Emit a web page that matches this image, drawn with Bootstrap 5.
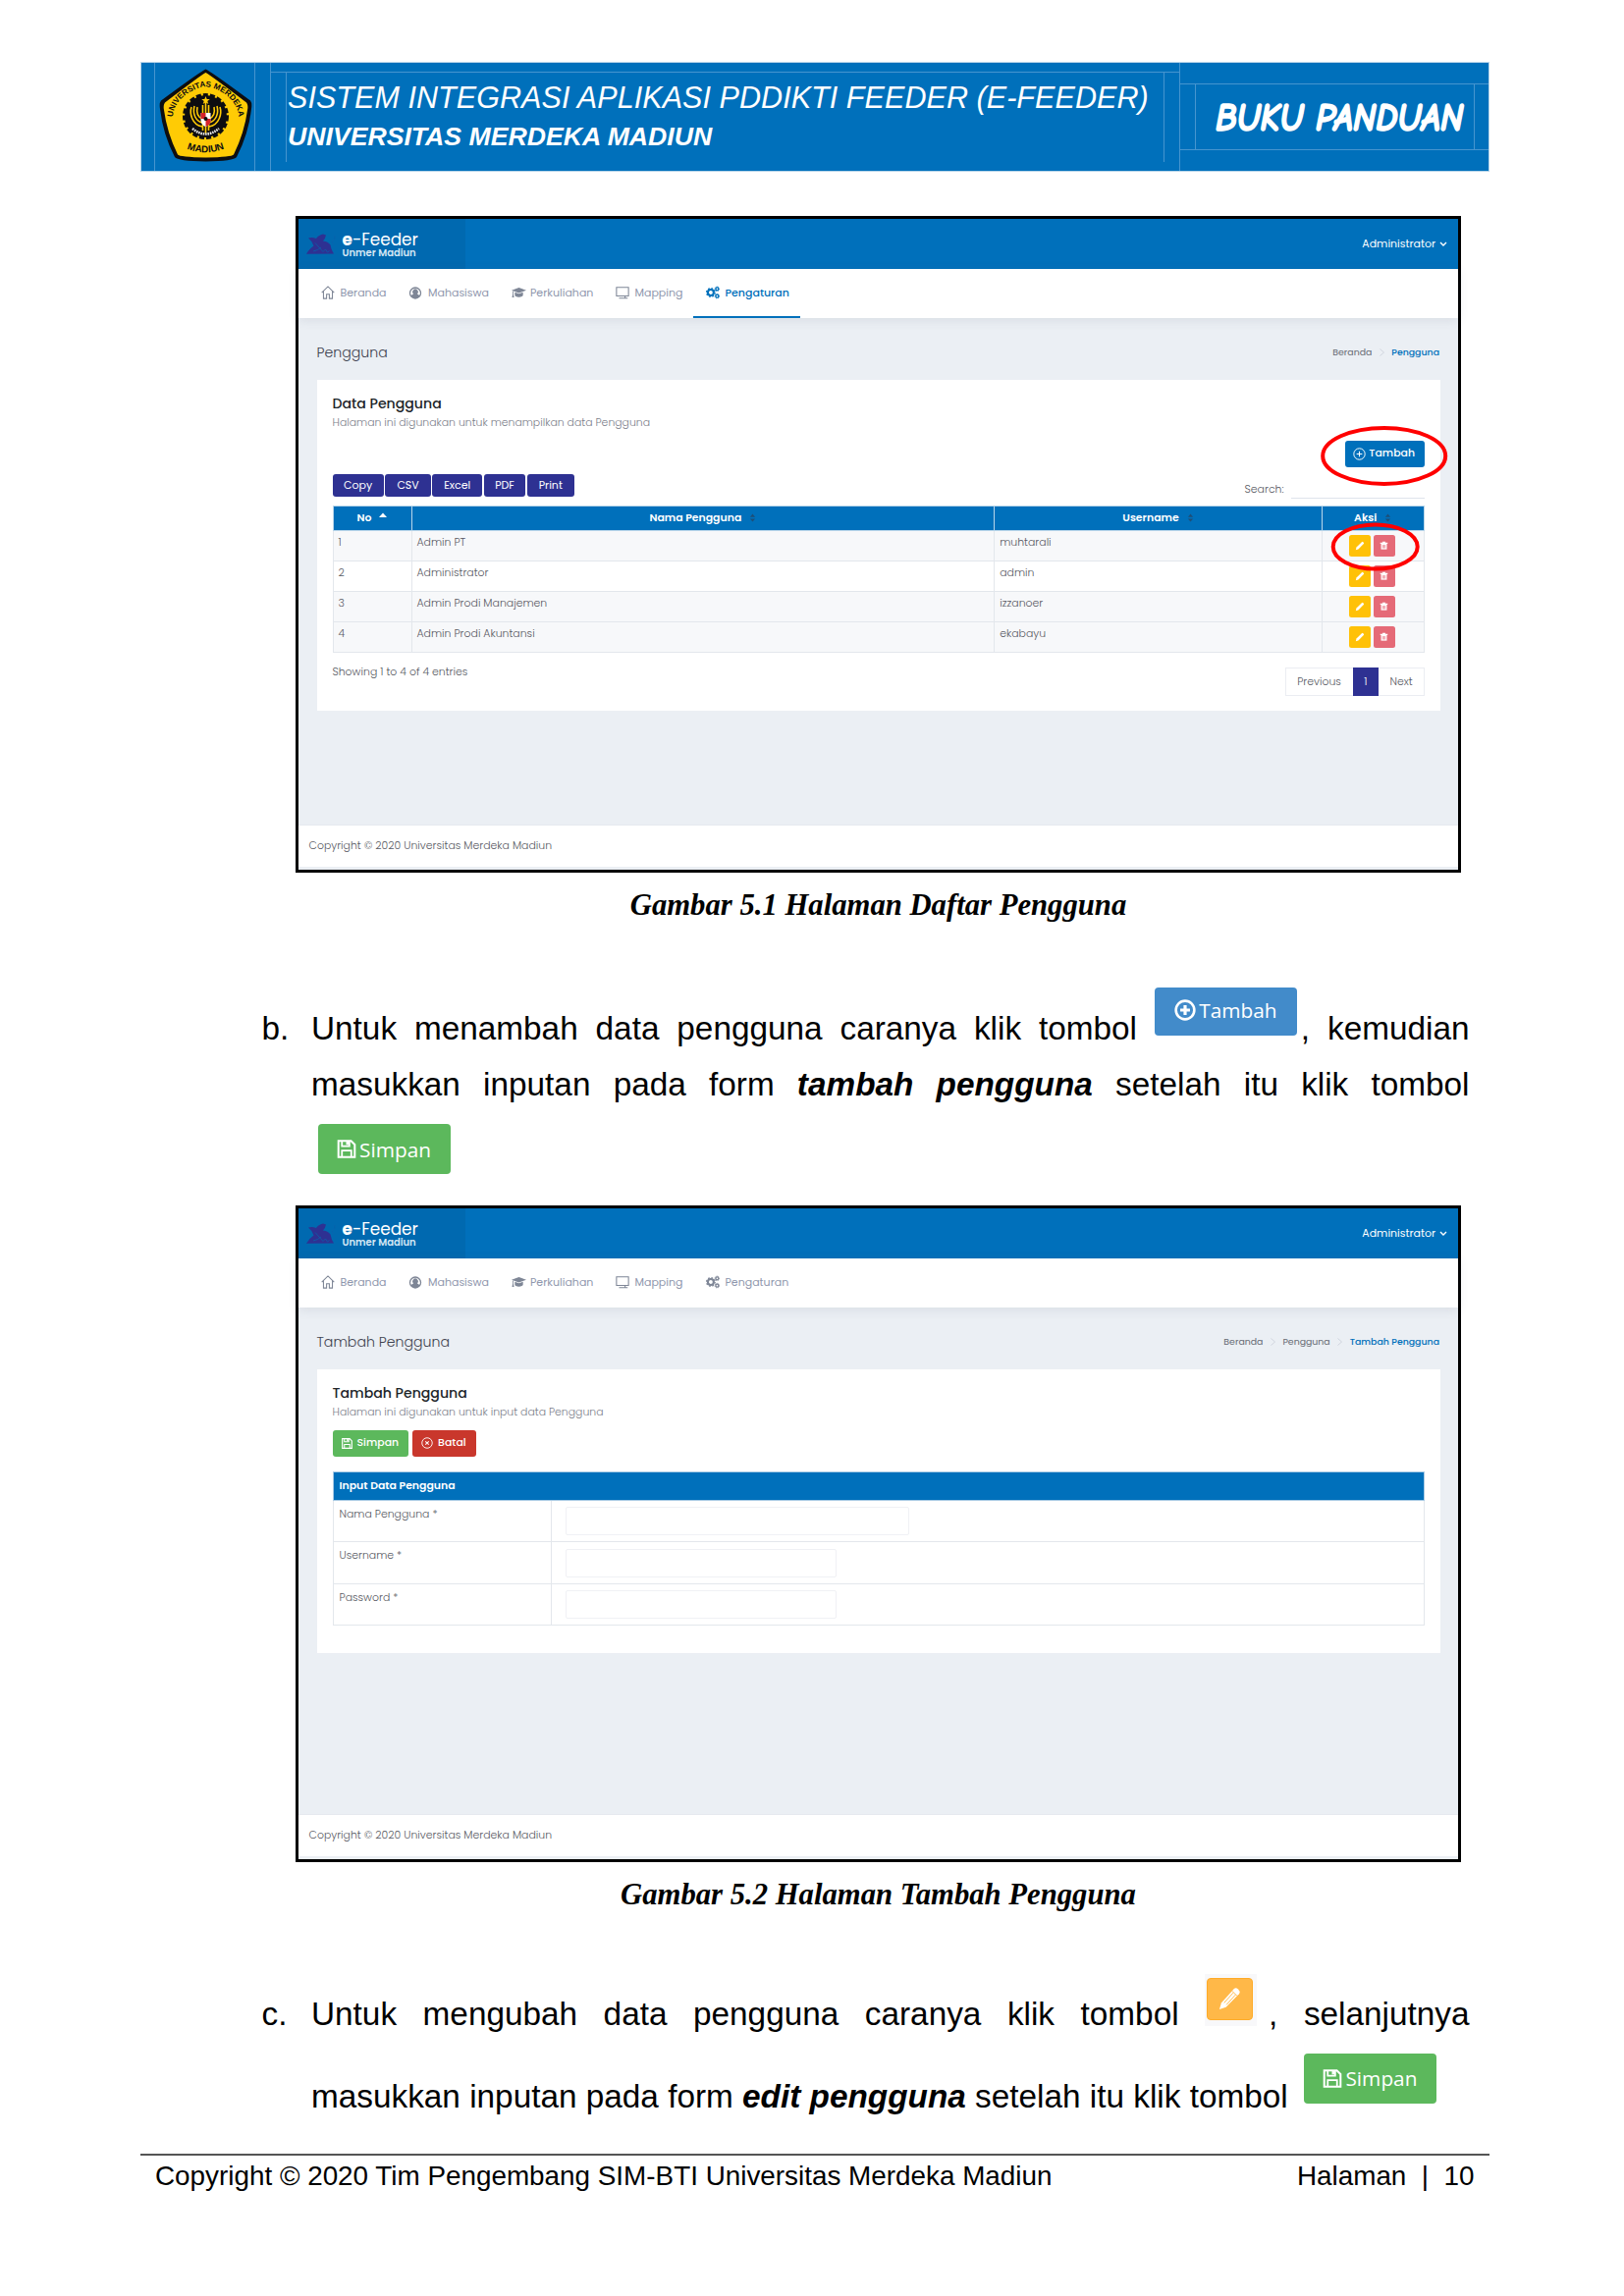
<!DOCTYPE html>
<html lang="id">
<head>
<meta charset="utf-8">
<meta name="viewport" content="width=device-width, initial-scale=1">
<title>Buku Panduan e-Feeder</title>
<link rel="stylesheet" href="https://cdn.jsdelivr.net/npm/bootstrap@5.3.0/dist/css/bootstrap.min.css">
<style>
:root{--brand:#0070bb;--indigo:#2e3192;--rule:#4695cf;--cell:#e3e7ec}
body{width:1654px;height:2339px;overflow:hidden;background:#fff;color:#000;font-family:"Liberation Sans",Arial,sans-serif}
svg{display:block;flex:none}

/* running header */
.doc-head{width:1373.5px;height:112px;margin:63px 0 0 143px;background:var(--brand);color:#fff;outline:1px solid #b9d6ea;outline-offset:-1px}
.seal-cell{width:132.5px;padding:0 15px 0 14px;border-right:1px solid var(--rule)}
.seal-in{border:1px solid var(--rule);border-width:0 1px;padding:6px 0 0 2.5px;height:100%}
.title-cell{width:926px;padding-top:10px;border-right:1px solid var(--rule)}
.title-top{border-top:1px solid var(--rule);padding:0 15px}
.title-in{height:91px;padding:4.5px 0 0 1.5px;border:1px solid var(--rule);border-width:0 1px;font-style:italic;white-space:nowrap}
.t-one{font-size:30.55px;line-height:41.5px;letter-spacing:.04px}
.t-two{font-size:26.65px;line-height:39.5px;font-weight:700}
.book-cell{width:315px;padding:22px 0}
.book-mid{height:68px;border:1px solid var(--rule);border-width:1px 0;padding:0 15px}
.book-in{height:100%;border:1px solid var(--rule);border-width:0 1px}
.book-in svg{overflow:visible}

/* framed application windows */
.shot{width:1187px;height:669px;margin:0 0 0 301px;border:3px solid #000;background:#ebeff4;color:#575962;font:300 10.9px/18px Poppins,Inter,sans-serif;overflow:visible}
.topbar{height:51px;background:var(--brand);color:#fff;padding:0;flex:none}
.brandbox{width:170px;height:51px;background:#0069b0;padding:1px 0 0 7.5px}
.b-one{font-size:16.9px;line-height:17px;margin-top:1px;font-weight:400}
.b-one b{font-weight:700}
.b-two{font-size:10px;line-height:10px;font-weight:600;color:#d5e7f4;margin-top:.5px}
.admin-link{font-size:10.95px;font-weight:400;padding-right:11px}
.tabs{height:50px;background:#fff;padding-left:10px;box-shadow:0 2px 11px rgba(70,80,110,.12);position:relative;flex:none}
.tabs .nav-link{height:50px;padding:0 0 0 12.5px;gap:6px;font-size:11px;font-weight:400;color:#8f97ad;border-bottom:2.5px solid transparent;border-radius:0;white-space:nowrap}
.tabs .nav-link svg{color:#7e8696}
.tabs .nav-link.active{color:var(--brand);font-weight:500;border-color:var(--brand)}
.tabs .nav-link.active svg{color:var(--brand)}
.w1{width:89.5px}.w2{width:105px}.w3{width:105.5px}.w4{width:92px}.w5{width:108.7px}
.tabs .w3{gap:4px}
.pagehead{height:63px;padding:7px 19px 0 18.5px;flex:none}
.pagehead h2{font:300 14.15px/20px Poppins,Inter,sans-serif;color:#3f4350;margin:0}
.crumbs{font-size:9.4px;font-weight:400;gap:7.5px}
.crumbs span{color:#666a73}
.crumbs b{font-weight:500;color:var(--brand)}
.panel{margin:0 18.5px 0 19px;background:#fff;padding:14px 15.5px 0 15.5px;flex:none}
.p-list{height:337px}.p-form{height:289px}
.panel h3{font:500 14.1px/20px Poppins,Inter,sans-serif;color:#212529;margin:0}
.sub{font-size:10.88px;line-height:18px;color:#7b7e8a;margin:1px 0 0}
.btn-app{height:26.5px;border-radius:3px;color:#fff;font-size:10.9px;font-weight:500;line-height:1;padding:0 10px 0 9px;gap:3px;border:0}
.c-blue{background:var(--brand);padding-left:8.5px}.c-green{background:#5cb85c}.c-red{background:#c9372c}
.tools{height:31.5px;margin-top:7.7px}
.tools .btn{height:22.7px;border-radius:3px;background:var(--indigo);color:#fff;font-size:11px;font-weight:400;line-height:1;padding:0 0 1px;border:0;margin-right:1.8px}
.find{margin-top:7px}
.find i{width:136px;height:17.5px;border-bottom:1px solid #dfe3ec;margin-left:7.5px}
.grid{table-layout:fixed;width:1112px;margin:0;color:inherit;border:1px solid var(--cell);border-collapse:collapse}
.grid>thead>tr>th{height:25px;padding:0;background:var(--brand);color:#fff;font-weight:600;font-size:10.9px;text-align:center;border:1px solid #b9d6ea;line-height:17px;box-shadow:none}
.grid>tbody>tr>td{height:31px;padding:3px 0 0 5px;border:1px solid var(--cell);background:#f7f8fa;color:#575962;line-height:18px;vertical-align:top;box-shadow:none;font-size:10.9px}
.grid>tbody>tr.plain>td{background:#fff}
.grid>tbody>tr>td.act{padding:4.5px 0 0 27px}
.grid th svg{display:inline-block;margin-left:8px;vertical-align:-1px}
.act span{width:22px;height:21.6px;border-radius:2.5px;color:#fff}
.act .y{background:#ffc107;margin-right:3px}.act .p{background:#e56a77}
.pager{height:28.7px;border:1px solid #ebedf2;margin-top:4.5px;line-height:27px;font-weight:300}
.pager span{text-align:center}
.pager .on{background:var(--indigo);color:#fff;margin:-1px 0;line-height:29px}
.copybar{height:43px;background:#fff;border-top:1px solid #e6e9ef;padding:12px 0 0 10.5px;margin-bottom:3.5px}
.frm{table-layout:fixed;width:1112px;margin:0;border:1px solid var(--cell);border-collapse:collapse}
.frm>thead>tr>th{height:28.5px;background:var(--brand);color:#fff;font-weight:600;font-size:10.9px;padding:0 0 0 6px;border:1px solid #a9cbe5;line-height:18px;vertical-align:middle}
.frm>tbody>tr>td{height:42.5px;padding:5px 0 0 6px;border:1px solid var(--cell);color:#575962;line-height:18px;vertical-align:top;font-size:10.9px}
.frm>tbody>tr>td+td{padding:6.5px 0 0 14px}
.frm .form-control{height:29px;border:1px solid #f0f1f5;border-radius:2px;padding:0}
.long{width:350px}.short{width:276px}
.rings{position:absolute;left:0;top:0;pointer-events:none}

/* captions, steps, running footer */
.cap{font:italic 700 30.7px/46px "Liberation Serif","Times New Roman",serif;width:1187px;margin-left:301px;text-align:center}
.ln{width:1179.5px;height:57px;margin-left:317px;font-size:33.33px;line-height:57px;white-space:nowrap;color:#000}
.ln.full{text-align:justify;text-align-last:justify}
.mk{display:inline-block;width:50.5px;margin-left:-50.5px;text-align-last:left}
.pic{display:inline-flex;vertical-align:bottom;align-items:center;justify-content:center;border-radius:4px;color:#fff;font:400 20.8px/24px "Open Sans",sans-serif;gap:3px}
.pic-add{width:145px;height:49px;background:#428bca;margin:-13.5px 4px 21.5px 0;padding-bottom:2px}
.pic-save{width:135px;height:51px;background:#5cb85c}
.pic-edit{width:53px;height:53px;background:#f8f8fa;border-radius:0;margin:-12px 12px 16px 0;padding:4px 4px 6px 2px}
.pic-edit span{width:47px;height:43px;background:#ffb848;border:1px solid #ffab27;border-radius:4px}
.doc-foot{width:1373.5px;margin-left:143px;border-top:2px solid #555;padding:1px 15px 0 15px;font-size:27.85px;line-height:40px;white-space:pre}
</style>
</head>
<body>
<svg width="0" height="0" class="position-absolute" aria-hidden="true">
<symbol id="i-home" viewBox="0 0 16 16"><path d="M.8 8.2 8 1l7.2 7.2M2.8 6.6V15h3.6v-5h3.2v5h3.6V6.6" fill="none" stroke="currentColor" stroke-width="1.2"/></symbol>
<symbol id="i-user" viewBox="0 0 16 16"><path fill-rule="evenodd" d="M8 .4a7.600 7.600 0 1 1 0 15.200A7.600 7.600 0 0 1 8 .4zM8 2a6 6 0 0 0-4.900 9.400c.5-1.500 1.400-2.200 2.700-2.300a3.400 3.400 0 1 1 4.400 0c1.300.1 2.200.8 2.700 2.300A6 6 0 0 0 8 2z" fill="currentColor"/></symbol>
<symbol id="i-cap" viewBox="0 0 18 16"><path d="M9 2 18 5.300 9 8.600 0 5.300z" fill="currentColor"/><path d="M4 7.700v3.600c0 1.200 2.300 2.300 5 2.300s5-1.100 5-2.300V7.700L9 9.600zM1.300 6.200h1v4.300l.8 3.500H.6l.7-3.500z" fill="currentColor"/></symbol>
<symbol id="i-screen" viewBox="0 0 16 16"><path d="M1 2h14v10H1zM4 14.500h10M11 12v2" fill="none" stroke="currentColor" stroke-width="1.200"/></symbol>
<symbol id="i-gears" viewBox="0 0 16 16"><circle cx="5.600" cy="8" r="3.400" fill="none" stroke="currentColor" stroke-width="2.400"/><circle cx="5.600" cy="8" r="4.900" fill="none" stroke="currentColor" stroke-width="1.500" stroke-dasharray="1.900 1.950"/><circle cx="13" cy="3.800" r="1.700" fill="none" stroke="currentColor" stroke-width="1.500"/><circle cx="13" cy="3.800" r="2.600" fill="none" stroke="currentColor" stroke-dasharray="1.100 .94"/><circle cx="13" cy="12.200" r="1.700" fill="none" stroke="currentColor" stroke-width="1.500"/><circle cx="13" cy="12.200" r="2.600" fill="none" stroke="currentColor" stroke-dasharray="1.100 .94"/></symbol>
<symbol id="i-plus" viewBox="0 0 16 16"><circle cx="8" cy="8" r="7" fill="none" stroke="currentColor" stroke-width="1.200"/><path d="M8 4.500v7M4.500 8h7" stroke="currentColor" stroke-width="1.300"/></symbol>
<symbol id="i-plusb" viewBox="0 0 16 16"><circle cx="8" cy="8" r="6.800" fill="none" stroke="currentColor" stroke-width="1.900"/><path d="M8 4.400v7.200M4.400 8h7.200" stroke="currentColor" stroke-width="2.300"/></symbol>
<symbol id="i-x" viewBox="0 0 16 16"><circle cx="8" cy="8" r="7" fill="none" stroke="currentColor" stroke-width="1.200"/><path d="m5.700 5.700 4.600 4.600m0-4.600-4.600 4.600" stroke="currentColor" stroke-width="1.400"/></symbol>
<symbol id="i-save" viewBox="0 0 16 16"><path d="M1 1h10.800L15 4.200V15H1z" fill="none" stroke="currentColor" stroke-width="1.700"/><path d="M4 15V9.400h8V15M4 1v4.600h6.400V1" fill="none" stroke="currentColor" stroke-width="1.500"/><path d="M7.600 1.500h2.200v3H7.600z" fill="currentColor"/></symbol>
<symbol id="i-pen" viewBox="0 0 10 10"><path d="M.8 9.300 1.500 6.600 6.900 1.200a1 1 0 0 1 1.400 0l.5.5a1 1 0 0 1 0 1.400L3.400 8.500z" fill="currentColor"/></symbol>
<symbol id="i-pencil" viewBox="0 0 28 28"><path d="M3 25 5.200 18 18.500 3.200q2-1.700 4 .2l1.300 1.500q1.500 1.800 0 3.600L10 22.500z" fill="#fff"/><path d="m8 18 9.500-10.500M10.500 20 20 9.500M16.500 5.500l5 5" stroke="#ffb848" stroke-width="1" fill="none"/></symbol>
<symbol id="i-bin" viewBox="0 0 10 10"><path d="M.8 2h8.400v1.300H.8zM3.300.7h3.400V2H3.300z" fill="currentColor"/><path d="M1.700 3.300h6.600V9.600H1.700z" fill="currentColor"/><path d="M3.600 4.500v3.800M5 4.500v3.800M6.400 4.500v3.800" stroke="#e56a77" stroke-width=".7"/></symbol>
<symbol id="i-sort" viewBox="0 0 8 10"><path d="M4 .5 7 4H1zM4 9.500 7 6H1z" fill="#1d4f78"/></symbol>
<symbol id="i-mark" viewBox="0 0 30 22"><path d="M2 4.500Q6 3.500 10 5 12 1.500 17 .500L20 1.500Q19.500 4.500 17 7.500 22 8 24.500 11.500 25.500 17 28 20.500L0 20.800Q2.500 16 7.500 12.500 6 7.500 2 4.500z" fill="#2e3192"/><path d="m9 9.500 4 4.500 4 4.500 2.500-2.500 2 3 2-1.500M7 18q5-1 8-4" stroke="#0a5fa9" fill="none" stroke-width=".8"/><path d="M28 2c2 1.500 1.500 3-.5 4.500s-2 3 .8 4.500" stroke="#0c63ad" fill="none" stroke-width=".8"/></symbol>
</svg>

<header class="doc-head d-flex">
  <div class="seal-cell"><div class="seal-in">
    <svg width="97" height="97" viewBox="0 0 97 97">
      <defs><path id="arcTop" d="M16 58C12 45 20 31 34 24Q42 19.500 48.500 19.500Q55 19.500 63 24C77 31 85 45 81 58"/><path id="arcBot" d="M26 81Q48 91.500 71 81"/></defs>
      <path d="M48.500 1.500Q52 2.500 94 33.500Q96 36 95 42Q92 68 80 91Q77 95 48.500 95.500Q20 95 17 91Q5 68 2 42Q1 36 3 33.500Q45 2.500 48.500 1.500z" fill="#0d0d10"/>
      <path d="M48.500 5Q52 6.500 90 35.500Q92 38 91 43Q88 66 77 88.500Q75 91 48.500 91.500Q22 91 20 88.500Q9 66 6 43Q5 38 7 35.500Q45 6.500 48.500 5z" fill="#ffcb05"/>
      <g font-family="Liberation Sans,Arial,sans-serif" font-weight="700" fill="#0d0d10"><text font-size="8.200"><textPath href="#arcTop" startOffset="50%" text-anchor="middle">UNIVERSITAS MERDEKA</textPath></text><text font-size="9.800"><textPath href="#arcBot" startOffset="50%" text-anchor="middle">MADIUN</textPath></text></g>
      <circle cx="48.500" cy="49.500" r="21.500" fill="#0d0d10"/><circle cx="48.500" cy="49.500" r="21.500" fill="none" stroke="#0d0d10" stroke-width="4" stroke-dasharray="5 2"/>
      <g fill="none" stroke="#ffcb05" stroke-width="1.600"><path d="M45 60C34 58 32 46 34 40M45 56C38 54 35 47 37 39M45 52C40 50 39 45 40 40M52 60C63 58 65 46 63 40M52 56C59 54 62 47 60 39M52 52C57 50 58 45 57 40M48.500 35V67M45.500 38v26M51.500 38v26"/></g>
      <path d="m48.500 29 1.200 3h3.100l-2.500 2 1 3-2.800-1.800-2.800 1.800 1-3-2.500-2h3.100z" fill="#ffcb05"/>
      <path d="M43.500 46h10v8q-1 5-5 6-4-1-5-6z" fill="#fff"/><path d="M43.500 46h5v6h-5zM48.500 52h5v3q-1 4-5 5z" fill="#d8232a"/><circle cx="48.500" cy="52" r="2" fill="#0d0d10"/>
      <path d="M35 62Q48.500 73 62 62" fill="none" stroke="#e8e8e8" stroke-width="2.600" stroke-dasharray="1.600 .8"/>
    </svg></div></div>
  <div class="title-cell"><div class="title-top"><div class="title-in">
    <div class="t-one">SISTEM INTEGRASI APLIKASI PDDIKTI FEEDER (E-FEEDER)</div>
    <div class="t-two">UNIVERSITAS MERDEKA MADIUN</div></div></div></div>
  <div class="book-cell"><div class="book-mid"><div class="book-in">
    <svg width="283" height="66"><g transform="translate(20 46.500) scale(.87 1)"><text font-family="'Comic Neue','Open Sans Condensed',Lato,sans-serif" font-size="41" font-weight="700" font-style="italic" fill="#fff" stroke="#fff" stroke-width="1.600" stroke-linejoin="round" textLength="290" lengthAdjust="spacingAndGlyphs">BUKU PANDUAN</text></g></svg></div></div></div>
</header>

<main>
<section class="shot position-relative d-flex flex-column" style="margin-top:45px">
  <div class="topbar d-flex justify-content-between align-items-center">
    <div class="brandbox d-flex align-items-center"><svg width="30" height="22"><use href="#i-mark"/></svg>
      <div style="margin-left:7px"><div class="b-one"><b>e</b>-Feeder</div><div class="b-two">Unmer Madiun</div></div></div>
    <div class="admin-link d-flex align-items-center">Administrator<svg width="8" height="6" viewBox="0 0 8 6" class="ms-1"><path d="m1 1 3 3 3-3" fill="none" stroke="#fff" stroke-width="1.400"/></svg></div>
  </div>
  <nav class="tabs nav flex-nowrap">
    <a class="nav-link w1 d-flex align-items-center"><svg width="14" height="14"><use href="#i-home"/></svg>Beranda</a>
    <a class="nav-link w2 d-flex align-items-center"><svg width="14" height="13"><use href="#i-user"/></svg>Mahasiswa</a>
    <a class="nav-link w3 d-flex align-items-center"><svg width="15" height="14"><use href="#i-cap"/></svg>Perkuliahan</a>
    <a class="nav-link w4 d-flex align-items-center"><svg width="14" height="14"><use href="#i-screen"/></svg>Mapping</a>
    <a class="nav-link w5 d-flex align-items-center active"><svg width="14" height="14"><use href="#i-gears"/></svg>Pengaturan</a>
  </nav>
  <div class="pagehead d-flex justify-content-between align-items-center"><h2>Pengguna</h2>
    <div class="crumbs d-flex align-items-center"><span>Beranda</span><svg width="5" height="8" viewBox="0 0 5 8"><path d="m.5.500 4 3.500-4 3.500" fill="none" stroke="#c9ced9" stroke-width=".8"/></svg><b>Pengguna</b></div></div>
  <div class="panel p-list">
    <h3>Data Pengguna</h3><p class="sub">Halaman ini digunakan untuk menampilkan data Pengguna</p>
    <div class="d-flex justify-content-end" style="margin-top:9px"><a class="btn-app c-blue d-flex align-items-center text-decoration-none"><svg width="13" height="13"><use href="#i-plus"/></svg>Tambah</a></div>
    <div class="tools d-flex justify-content-between align-items-start">
      <div class="d-flex"><button class="btn" style="width:52.200px">Copy</button><button class="btn" style="width:46.200px">CSV</button><button class="btn" style="width:50.500px">Excel</button><button class="btn" style="width:42.500px">PDF</button><button class="btn" style="width:47.500px">Print</button></div>
      <div class="find d-flex">Search:<i></i></div>
    </div>
    <table class="grid">
      <colgroup><col style="width:80px"><col style="width:593.700px"><col style="width:333.600px"><col></colgroup>
      <thead><tr><th>No<svg width="8" height="10" viewBox="0 0 8 10"><path d="M4 .5 8 5H0z" fill="#fff"/></svg></th><th>Nama Pengguna<svg width="7" height="9"><use href="#i-sort"/></svg></th><th>Username<svg width="7" height="9"><use href="#i-sort"/></svg></th><th>Aksi<svg width="7" height="9"><use href="#i-sort"/></svg></th></tr></thead>
      <tbody>
      <tr><td>1</td><td>Admin PT</td><td>muhtarali</td><td class="act"><div class="d-flex"><span class="y d-flex align-items-center justify-content-center"><svg width="10" height="10"><use href="#i-pen"/></svg></span><span class="p d-flex align-items-center justify-content-center"><svg width="9" height="9"><use href="#i-bin"/></svg></span></div></td></tr>
      <tr class="plain"><td>2</td><td>Administrator</td><td>admin</td><td class="act"><div class="d-flex"><span class="y d-flex align-items-center justify-content-center"><svg width="10" height="10"><use href="#i-pen"/></svg></span><span class="p d-flex align-items-center justify-content-center"><svg width="9" height="9"><use href="#i-bin"/></svg></span></div></td></tr>
      <tr><td>3</td><td>Admin Prodi Manajemen</td><td>izzanoer</td><td class="act"><div class="d-flex"><span class="y d-flex align-items-center justify-content-center"><svg width="10" height="10"><use href="#i-pen"/></svg></span><span class="p d-flex align-items-center justify-content-center"><svg width="9" height="9"><use href="#i-bin"/></svg></span></div></td></tr>
      <tr><td>4</td><td>Admin Prodi Akuntansi</td><td>ekabayu</td><td class="act"><div class="d-flex"><span class="y d-flex align-items-center justify-content-center"><svg width="10" height="10"><use href="#i-pen"/></svg></span><span class="p d-flex align-items-center justify-content-center"><svg width="9" height="9"><use href="#i-bin"/></svg></span></div></td></tr>
      </tbody>
    </table>
    <div class="d-flex justify-content-between align-items-start" style="padding-top:11px"><div>Showing 1 to 4 of 4 entries</div>
      <div class="pager d-flex"><span style="width:68px">Previous</span><span class="on" style="width:26.500px">1</span><span style="width:46px">Next</span></div></div>
  </div>
  <footer class="copybar mt-auto">Copyright © 2020 Universitas Merdeka Madiun</footer>
  <svg class="rings" width="1181" height="663" fill="none" stroke="#f00" stroke-width="4"><ellipse cx="1105.700" cy="241.400" rx="62.500" ry="28.500"/><ellipse cx="1096.700" cy="334" rx="43" ry="22.500"/></svg>
</section>
<div class="cap" style="margin-top:10px">Gambar 5.1 Halaman Daftar Pengguna</div>

<div class="ln full" style="margin-top:74px"><span class="mk">b.</span>Untuk menambah data pengguna caranya klik tombol <span class="pic pic-add"><svg width="22" height="22"><use href="#i-plusb"/></svg>Tambah</span>, kemudian</div>
<div class="ln full">masukkan inputan pada form <b><i>tambah</i></b> <b><i>pengguna</i></b> setelah itu klik tombol</div>
<div class="d-flex" style="margin:12px 0 0 323.500px"><span class="pic pic-save"><svg width="20" height="19"><use href="#i-save"/></svg>Simpan</span></div>

<section class="shot position-relative d-flex flex-column" style="margin-top:32px">
  <div class="topbar d-flex justify-content-between align-items-center">
    <div class="brandbox d-flex align-items-center"><svg width="30" height="22"><use href="#i-mark"/></svg>
      <div style="margin-left:7px"><div class="b-one"><b>e</b>-Feeder</div><div class="b-two">Unmer Madiun</div></div></div>
    <div class="admin-link d-flex align-items-center">Administrator<svg width="8" height="6" viewBox="0 0 8 6" class="ms-1"><path d="m1 1 3 3 3-3" fill="none" stroke="#fff" stroke-width="1.400"/></svg></div>
  </div>
  <nav class="tabs nav flex-nowrap">
    <a class="nav-link w1 d-flex align-items-center"><svg width="14" height="14"><use href="#i-home"/></svg>Beranda</a>
    <a class="nav-link w2 d-flex align-items-center"><svg width="14" height="13"><use href="#i-user"/></svg>Mahasiswa</a>
    <a class="nav-link w3 d-flex align-items-center"><svg width="15" height="14"><use href="#i-cap"/></svg>Perkuliahan</a>
    <a class="nav-link w4 d-flex align-items-center"><svg width="14" height="14"><use href="#i-screen"/></svg>Mapping</a>
    <a class="nav-link w5 d-flex align-items-center"><svg width="14" height="14"><use href="#i-gears"/></svg>Pengaturan</a>
  </nav>
  <div class="pagehead d-flex justify-content-between align-items-center"><h2>Tambah Pengguna</h2>
    <div class="crumbs d-flex align-items-center"><span>Beranda</span><svg width="5" height="8" viewBox="0 0 5 8"><path d="m.5.500 4 3.500-4 3.500" fill="none" stroke="#c9ced9" stroke-width=".8"/></svg><span>Pengguna</span><svg width="5" height="8" viewBox="0 0 5 8"><path d="m.5.500 4 3.500-4 3.500" fill="none" stroke="#c9ced9" stroke-width=".8"/></svg><b>Tambah Pengguna</b></div></div>
  <div class="panel p-form">
    <h3>Tambah Pengguna</h3><p class="sub">Halaman ini digunakan untuk input data Pengguna</p>
    <div class="d-flex" style="margin:9px 0 15.500px;gap:4px"><a class="btn-app c-green d-flex align-items-center text-decoration-none" style="gap:5px"><svg width="11" height="11"><use href="#i-save"/></svg>Simpan</a><a class="btn-app c-red d-flex align-items-center text-decoration-none" style="gap:5px"><svg width="12" height="12"><use href="#i-x"/></svg>Batal</a></div>
    <table class="frm"><colgroup><col style="width:222px"><col></colgroup>
      <thead><tr><th colspan="2">Input Data Pengguna</th></tr></thead>
      <tbody><tr><td>Nama Pengguna *</td><td><input class="form-control long"></td></tr><tr><td>Username *</td><td><input class="form-control short"></td></tr><tr><td>Password *</td><td><input class="form-control short"></td></tr></tbody></table>
  </div>
  <footer class="copybar mt-auto">Copyright © 2020 Universitas Merdeka Madiun</footer>
</section>
<div class="cap" style="margin-top:10px">Gambar 5.2 Halaman Tambah Pengguna</div>

<div class="ln full" style="margin-top:70px"><span class="mk">c.</span>Untuk mengubah data pengguna caranya klik tombol <span class="pic pic-edit"><span class="d-flex align-items-center justify-content-center"><svg width="27" height="27"><use href="#i-pencil"/></svg></span></span>, selanjutnya</div>
<div class="ln" style="margin-top:27px">masukkan inputan pada form <b><i>edit pengguna</i></b> setelah itu klik tombol <span class="pic pic-save" style="margin:-15.500px 0 21.500px 7px"><svg width="20" height="19"><use href="#i-save"/></svg>Simpan</span></div>
</main>
<footer class="doc-foot d-flex justify-content-between" style="margin-top:30px"><span>Copyright © 2020 Tim Pengembang SIM-BTI Universitas Merdeka Madiun</span><span>Halaman  |  10</span></footer>
<script src="https://cdn.jsdelivr.net/npm/bootstrap@5.3.0/dist/js/bootstrap.bundle.min.js"></script>
</body>
</html>
